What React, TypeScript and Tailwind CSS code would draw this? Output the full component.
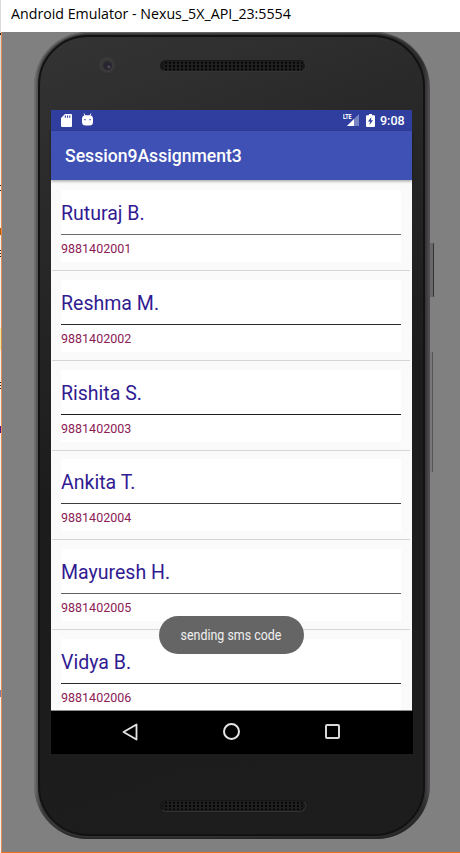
const contacts = [
  { name: 'Ruturaj B.', phone: '9881402001', line: 'bg-[#6b6b6b]' },
  { name: 'Reshma M.', phone: '9881402002', line: 'bg-[#2b2b2b]' },
  { name: 'Rishita S.', phone: '9881402003', line: 'bg-[#1c1c1c]' },
  { name: 'Ankita T.', phone: '9881402004', line: 'bg-[#3c3c3c]' },
  { name: 'Mayuresh H.', phone: '9881402005', line: 'bg-[#606060]' },
  { name: 'Vidya B.', phone: '9881402006', line: 'bg-[#2b2b2b]' },
];

function Speaker() {
  return (
    <div className="h-3 w-[146px] overflow-hidden rounded-full border border-[#161616] border-r-[#333] border-b-[#333] bg-[#171717]">
      <div className="mx-[3px] h-full bg-[radial-gradient(circle,#040404_0.9px,#1f1f1f_1.4px)] bg-[size:4px_3.4px]" />
    </div>
  );
}

function StatusBar() {
  return (
    <div className="flex h-[21px] items-center bg-[#303f9f] text-white">
      <svg className="ml-[10px] h-[13px] w-[11px]" viewBox="0 0 11 13">
        <path fill="#fff" fillRule="evenodd" d="M4 0h6q1 0 1 1v11q0 1-1 1H1q-1 0-1-1V4zM3.8 1.500v2.300h1.100V1.500zM6 1.500v2.300h1.100V1.500zM8.200 1.500v2.300h1.100V1.500z" />
      </svg>
      <svg className="mb-[2px] ml-[10px] h-[13px] w-[11px]" viewBox="0 0 11 13">
        <path d="M2 .5l1.200 2.400M9 .5L7.800 2.900" stroke="#fff" strokeWidth=".9" />
        <path fill="#fff" fillRule="evenodd" d="M0 5.800Q.2 2.200 3.200 2.200h4.600Q10.800 2.200 11 5.800V9q0 3.500-3.500 3.500h-4Q0 12.500 0 9zM2.300 6v1.300h1.300V6zM7.400 6v1.300h1.300V6z" />
      </svg>
      <div className="flex-1" />
      <svg className="mb-px h-[14px] w-4" viewBox="0 0 16 14">
        <path fill="#7984c3" d="M16 1v12H4z" />
        <path fill="#fff" d="M11 6v7H4z" />
        <text x="0" y="6.300" fontSize="7.500" fontWeight="800" fontFamily="Roboto, sans-serif" fill="#fff" textLength="8.500" lengthAdjust="spacingAndGlyphs">LTE</text>
      </svg>
      <svg className="mb-px ml-[7px] h-[13px] w-[9px]" viewBox="0 0 9 13">
        <path fill="#fff" fillRule="evenodd" d="M3 0h3v1.300h2q1 0 1 1V12q0 1-1 1H1q-1 0-1-1V2.300q0-1 1-1h2zM5.300 3L2 7.500h2L3.500 11 7 6.300H5z" />
      </svg>
      <span className="mr-[7px] ml-[5px] w-[25px] pt-px text-[12.500px] leading-none font-medium whitespace-nowrap">9:08</span>
    </div>
  );
}

function NavBar() {
  return (
    <div className="flex h-[43px] w-[362px] items-center bg-black pb-[2px] pl-[71px]">
      <svg className="h-[18px] w-[16px]" viewBox="0 0 16 18">
        <path d="M14.500 1.500v15L1.500 9z" fill="none" stroke="#e4e4e4" strokeWidth="1.800" strokeLinejoin="round" />
      </svg>
      <div className="ml-[85px] h-[17px] w-[17px] rounded-full border-2 border-[#e4e4e4]" />
      <div className="ml-[85px] h-[15px] w-[15px] rounded-[2px] border-2 border-[#d8d8d8]" />
    </div>
  );
}

function Screen() {
  return (
    <div className="relative mt-[21px] ml-[11px] flex h-[644px] w-[361px] flex-col bg-[#fafafa]">
      <StatusBar />
      <div className="z-10 flex h-[49px] items-center bg-[#3f51b5] pt-[2px] pl-[14px] text-[17.600px] font-medium text-white shadow-[0_1px_3px_rgba(0,0,0,0.4)]">
        Session9Assignment3
      </div>
      <div className="h-[531px] overflow-hidden border-b border-[#909090] px-[1px]">
        {contacts.map((c) => (
          <div key={c.phone} className="flex h-[89.800px] flex-col pt-[10px]">
            <div className="mr-[10px] ml-[9px] h-[72px] shrink-0 bg-white">
              <div className="h-[44px] pt-[10px] text-[19.550px] leading-[27px] text-[#311b92]">{c.name}</div>
              <div className={`h-px ${c.line}`} />
              <div className="pt-[6px] text-[12.500px] leading-[16px] text-[#8c2055]">{c.phone}</div>
            </div>
            <div className="mt-[8px] mr-px h-px shrink-0 bg-[#d6d6d6]" />
          </div>
        ))}
      </div>
      <NavBar />
      <div className="absolute top-[506px] left-[108px] z-20 flex h-[38px] w-[145px] items-center justify-center rounded-full bg-[#656565] pt-[2px] pr-[2px]">
        <span className="inline-block scale-x-[0.870] text-[14.300px] whitespace-nowrap text-[#f0f0f0]">sending sms code</span>
      </div>
    </div>
  );
}

export default function App() {
  return (
    <div className="flex h-[853px] w-[460px] overflow-hidden bg-white font-['Roboto',sans-serif]">
      <svg className="h-[853px] w-px shrink-0" viewBox="0 0 1 853" preserveAspectRatio="none" shapeRendering="crispEdges">
        <path fill="#d9d9d9" d="M0 0h1v80H0z" />
        <path fill="#eeeeee" d="M0 80h1v773H0z" />
        <path fill="#222" d="M0 33h1v2H0zM0 185h1v1H0zM0 190h1v1H0zM0 250h1v1H0zM0 253h1v1H0zM0 256h1v1H0zM0 382h1v1H0zM0 385h1v1H0zM0 388h1v1H0z" />
        <path fill="#b55b00" d="M0 228h1v7H0z" />
        <path fill="#e6e69c" d="M0 328h1v22H0z" />
        <path fill="#55108c" d="M0 426h1v7H0z" />
        <path fill="#787ea8" d="M0 690h1v7H0z" />
      </svg>
      <div className="flex w-[459px] flex-col border-b border-l border-b-[#f26f21] border-l-[#e58a4e] bg-[#808080]">
        <div className="-ml-px h-8 shrink-0 bg-white pt-[3px] pl-[10px] font-['Open_Sans','Noto_Sans',sans-serif] text-[15px] leading-5 text-black">
          <span className="inline-block origin-left scale-x-[0.947] whitespace-nowrap">Android Emulator - Nexus_5X_API_23:5554</span>
        </div>
        <div className="flex">
          <div className="ml-[32px] h-[807px] w-[396px] rounded-[54px_56px_54px_54px] bg-[linear-gradient(90deg,#777_0,#555_3px,#3a3a3a_8px,#333_50px,#2c2c2c_388px,#393739_392px,#555355_396px)] pt-[3px] pr-[5px] pb-[3px] pl-[4px] shadow-[inset_0_-2px_2px_-1px_#222,inset_1px_1px_2px_0px_#777]">
            <div className="h-full rounded-[50px_52px_50px_50px] border-2 border-[#121212] bg-[linear-gradient(160deg,#343434_0%,#292929_20%,#1c1c1c_50%,#1d1d1d_100%)] pt-[20px]">
              <div className="flex h-[32px] pl-[59px]">
                <div className="flex h-4 w-4 items-center justify-center rounded-full bg-[#393939]">
                  <div className="h-[9px] w-[9px] rounded-full bg-[radial-gradient(circle_at_65%_65%,#765c60_0,#252433_2px,#29282f_5px)]" />
                </div>
                <div className="mt-[3px] ml-[45px]"><Speaker /></div>
              </div>
              <Screen />
              <div className="mt-[46px] ml-[120px]"><Speaker /></div>
            </div>
          </div>
          <div className="flex flex-col">
            <div className="mt-[211px] h-[54px] w-[4px] rounded-r-[1px] border-r border-[#333] bg-[#696969]" />
            <div className="mt-[55px] h-[120px] w-[3px] rounded-r-[1px] border-r border-[#555] bg-[#797979]" />
          </div>
        </div>
      </div>
    </div>
  );
}
